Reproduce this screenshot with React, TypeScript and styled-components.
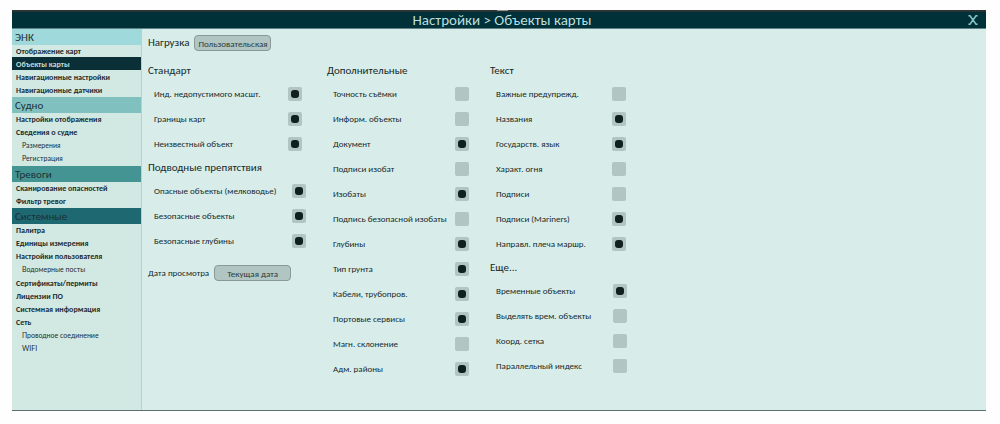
import React from 'react';
import styled, { createGlobalStyle } from 'styled-components';

const GlobalStyle = createGlobalStyle`
  * { box-sizing: border-box; }
  body {
    margin: 0;
    background: #fefefe;
    font-family: Carlito, Lato, sans-serif;
    color: #16292b;
  }
  h1, h2, ul { margin: 0; padding: 0; font-weight: 400; }
  ul { list-style: none; }
`;

const Window = styled.div`
  margin: 10px 14px 0 12px;
  border-bottom: 1px solid #5c6f70;
  background: #d8edea;
`;

const TitleBar = styled.header`
  position: relative;
  display: grid;
  grid-template-columns: 24px 1fr 18px;
  align-items: center;
  height: 19px;
  border-top: 2px solid #2b3335;
  border-bottom: 1px solid #5f8286;
  background: #003038;
  color: #b9dfde;
`;

const Grip = styled.span`
  position: absolute;
  top: -2px;
  left: calc(50% - 2px);
  width: 11px;
  height: 1px;
  background: #8b9394;
`;

const Title = styled.h1`
  grid-column: 2;
  font-size: 15px;
  line-height: 16px;
  text-align: center;
`;

const CloseButton = styled.button`
  display: flex;
  padding: 0;
  border: 0;
  background: none;
  color: #86c5c5;
`;

const Body = styled.div`
  display: flex;
`;

const Sidebar = styled.nav`
  flex: 0 0 130px;
  border-right: 1px solid #bccfce;
  background: #d1e9e2;
`;

const NavTitle = styled.h2<{ $bg: string }>`
  height: 16px;
  padding-left: 3px;
  background: ${(p) => p.$bg};
  color: #1c3033;
  font-size: 11px;
  line-height: 17px;
`;

const NavList = styled.ul`
  margin-top: -1px;
  padding-bottom: 1px;
`;

const SubList = styled.ul`
  padding-bottom: 1px;
`;

const NavLink = styled.a<{ $sub?: boolean; $active?: boolean }>`
  display: block;
  height: 13px;
  padding-left: ${(p) => (p.$sub ? 10 : 4)}px;
  background: ${(p) => (p.$active ? '#0b2f37' : 'transparent')};
  color: ${(p) => (p.$active ? '#c3dcda' : '#1c2c30')};
  font-family: ${(p) => (p.$sub ? 'Lato' : 'Carlito')}, sans-serif;
  font-size: ${(p) => (p.$sub ? 7 : 8)}px;
  font-weight: ${(p) => (p.$sub ? 400 : 700)};
  line-height: 14px;
  text-decoration: none;
  white-space: nowrap;
`;

const Content = styled.main`
  flex: 1;
  padding: 6px 6px 29px;
`;

const Field = styled.div`
  display: flex;
  align-items: center;
  gap: 5px;
`;

const FieldLabel = styled.span<{ $large?: boolean }>`
  font-size: ${(p) => (p.$large ? 11 : 9)}px;
  line-height: 16px;
`;

const ValueButton = styled.button`
  width: 77px;
  height: 16px;
  padding: 0;
  border: 1px solid #8a9997;
  border-radius: 4px;
  background: #b1c5c2;
  color: #2a3b3b;
  font: 400 9px/16px Carlito, Lato, sans-serif;
  white-space: nowrap;
`;

const Columns = styled.div`
  display: grid;
  grid-template-columns: 179px 163px 137px;
  align-items: start;
  padding-top: 8px;
`;

const GroupTitle = styled.h2`
  height: 22px;
  font-size: 11px;
  line-height: 24px;
`;

const Options = styled.ul<{ $width: number }>`
  width: ${(p) => p.$width}px;
  padding-left: 6px;
`;

const Option = styled.label`
  display: flex;
  align-items: center;
  justify-content: space-between;
  height: 25px;
  font-size: 9px;
  white-space: nowrap;
`;

const Check = styled.input.attrs({ type: 'checkbox' })`
  appearance: none;
  display: grid;
  place-items: center;
  width: 14px;
  height: 14px;
  margin: 0;
  border-radius: 2px;
  background: #b1c5c2;

  &:checked::before {
    content: '';
    width: 8px;
    height: 8px;
    border-radius: 3px;
    background: #10201e;
  }
`;

const DateField = styled(Field)`
  padding-top: 12px;
`;

type NavItem = { label: string; active?: boolean; children?: string[] };

const nav: { title: string; bg: string; items: NavItem[] }[] = [
  {
    title: 'ЭНК',
    bg: '#a0d9db',
    items: [
      { label: 'Отображение карт' },
      { label: 'Объекты карты', active: true },
      { label: 'Навигационные настройки' },
      { label: 'Навигационные датчики' },
    ],
  },
  {
    title: 'Судно',
    bg: '#80c1c0',
    items: [
      { label: 'Настройки отображения' },
      { label: 'Сведения о судне', children: ['Размерения', 'Регистрация'] },
    ],
  },
  {
    title: 'Тревоги',
    bg: '#449494',
    items: [{ label: 'Сканирование опасностей' }, { label: 'Фильтр тревог' }],
  },
  {
    title: 'Системные',
    bg: '#1e6971',
    items: [
      { label: 'Палитра' },
      { label: 'Единицы измерения' },
      { label: 'Настройки пользователя', children: ['Водомерные посты'] },
      { label: 'Сертификаты/пермиты' },
      { label: 'Лицензии ПО' },
      { label: 'Системная информация' },
      { label: 'Сеть', children: ['Проводное соединение', 'WIFI'] },
    ],
  },
];

type Item = [label: string, checked: boolean];

function Group({ title, width, items }: { title: string; width: number; items: Item[] }) {
  return (
    <section>
      <GroupTitle>{title}</GroupTitle>
      <Options $width={width}>
        {items.map(([label, checked]) => (
          <li key={label}>
            <Option>
              {label}
              <Check defaultChecked={checked} />
            </Option>
          </li>
        ))}
      </Options>
    </section>
  );
}

export default function App() {
  return (
    <>
      <GlobalStyle />
      <Window>
        <TitleBar>
          <Grip />
          <Title>Настройки &gt; Объекты карты</Title>
          <CloseButton aria-label="Закрыть">
            <svg width="10" height="10" viewBox="0 0 10 10" fill="none" stroke="currentColor" strokeWidth="1.6">
              <path d="M0.4 0.8H2L8 9.2H9.6M9.6 0.8H8L2 9.2H0.4" />
            </svg>
          </CloseButton>
        </TitleBar>
        <Body>
          <Sidebar>
            {nav.map((group) => (
              <section key={group.title}>
                <NavTitle $bg={group.bg}>{group.title}</NavTitle>
                <NavList>
                  {group.items.map((item) => (
                    <li key={item.label}>
                      <NavLink href="#" $active={item.active}>
                        {item.label}
                      </NavLink>
                      {item.children && (
                        <SubList>
                          {item.children.map((child) => (
                            <li key={child}>
                              <NavLink href="#" $sub>
                                {child}
                              </NavLink>
                            </li>
                          ))}
                        </SubList>
                      )}
                    </li>
                  ))}
                </NavList>
              </section>
            ))}
          </Sidebar>
          <Content>
            <Field>
              <FieldLabel $large id="load">Нагрузка</FieldLabel>
              <ValueButton aria-describedby="load">Пользовательская</ValueButton>
            </Field>
            <Columns>
              <div>
                <Group
                  title="Стандарт"
                  width={154}
                  items={[
                    ['Инд. недопустимого масшт.', true],
                    ['Границы карт', true],
                    ['Неизвестный объект', true],
                  ]}
                />
                <Group
                  title="Подводные препятствия"
                  width={158}
                  items={[
                    ['Опасные объекты (мелководье)', true],
                    ['Безопасные объекты', true],
                    ['Безопасные глубины', true],
                  ]}
                />
                <DateField>
                  <FieldLabel id="date">Дата просмотра</FieldLabel>
                  <ValueButton aria-describedby="date">Текущая дата</ValueButton>
                </DateField>
              </div>
              <Group
                title="Дополнительные"
                width={142}
                items={[
                  ['Точность съёмки', false],
                  ['Информ. объекты', false],
                  ['Документ', true],
                  ['Подписи изобат', false],
                  ['Изобаты', true],
                  ['Подпись безопасной изобаты', false],
                  ['Глубины', true],
                  ['Тип грунта', true],
                  ['Кабели, трубопров.', true],
                  ['Портовые сервисы', true],
                  ['Магн. склонение', false],
                  ['Адм. районы', true],
                ]}
              />
              <div>
                <Group
                  title="Текст"
                  width={136}
                  items={[
                    ['Важные предупрежд.', false],
                    ['Названия', true],
                    ['Государств. язык', true],
                    ['Характ. огня', false],
                    ['Подписи', false],
                    ['Подписи (Mariners)', true],
                    ['Направл. плеча маршр.', true],
                  ]}
                />
                <Group
                  title="Еще..."
                  width={137}
                  items={[
                    ['Временные объекты', true],
                    ['Выделять врем. объекты', false],
                    ['Коорд. сетка', false],
                    ['Параллельный индекс', false],
                  ]}
                />
              </div>
            </Columns>
          </Content>
        </Body>
      </Window>
    </>
  );
}
